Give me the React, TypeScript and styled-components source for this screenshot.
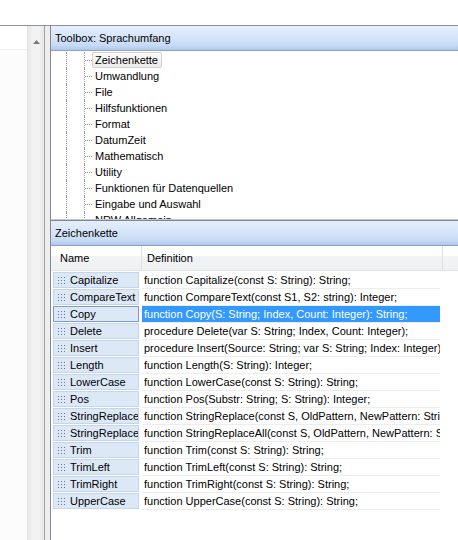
import React from "react";
import styled, { createGlobalStyle } from "styled-components";

const GlobalStyle = createGlobalStyle`
  html, body {
    margin: 0;
    padding: 0;
    background: #fff;
  }
  body {
    font-family: "Liberation Sans", Arial, sans-serif;
    font-size: 11px;
    color: #000;
  }
`;

const Screen = styled.div`
  width: 458px;
  height: 540px;
  overflow: hidden;
  display: flex;
  flex-direction: column;
  background: #fff;
`;

const TopStrip = styled.div`
  height: 25px;
  flex: none;
`;

const Workspace = styled.div`
  flex: 1;
  min-height: 0;
  display: flex;
  border-top: 1px solid #8a929c;
`;

const LeftPane = styled.div`
  width: 44px;
  flex: none;
  display: flex;
  border-right: 1px solid #9ca3ab;
`;

const LeftContent = styled.div`
  flex: 1;
  display: flex;
  flex-direction: column;
  border-right: 1px solid #e4e4e4;
`;

const LeftHeaderRow = styled.div`
  height: 23px;
  background: #fff;
  border-bottom: 1px solid #f0f0f0;
`;

const LeftBody = styled.div`
  flex: 1;
  background: #fcfcfc;
`;

const ScrollTrack = styled.div`
  width: 16px;
  display: flex;
  justify-content: center;
  padding-top: 14px;
  box-sizing: border-box;
  background: linear-gradient(to right, #e8e8e8, #f2f2f2 30%, #f2f2f2 70%, #e6e6e6);
`;

const Splitter = styled.div`
  width: 5px;
  flex: none;
  background: #eeeeee;
`;

const RightPane = styled.div`
  flex: 1;
  min-width: 0;
  display: flex;
  flex-direction: column;
  border-left: 1px solid #828790;
  background: #fff;
`;

const PanelHeader = styled.div<{ $topBorder?: boolean }>`
  flex: none;
  height: 24px;
  line-height: 24px;
  padding-left: 4px;
  white-space: nowrap;
  border-top: ${(p) => (p.$topBorder ? "1px solid #7d8796" : "none")};
  border-bottom: 1px solid #8ba2c2;
  background: linear-gradient(
    to bottom,
    #e4eefc 0%,
    #d7e5f9 45%,
    #c7dbf5 80%,
    #afc8ec 100%
  );
`;

const Tree = styled.div`
  flex: none;
  height: 169px;
  padding-top: 1px;
  box-sizing: border-box;
  overflow: hidden;
  border-bottom: 1px solid #c8c8c8;
`;

const TreeRow = styled.div`
  display: flex;
  height: 16px;
`;

const Indent = styled.div`
  width: 15px;
  flex: none;
`;

const Guide = styled.div`
  width: 18px;
  flex: none;
  border-left: 1px dotted #9a9a9a;
  box-sizing: border-box;
`;

const Branch = styled.div`
  width: 8px;
  flex: none;
  display: flex;
  align-items: center;
  border-left: 1px dotted #9a9a9a;
  box-sizing: border-box;
`;

const Connector = styled.div`
  flex: 1;
  height: 0;
  border-top: 1px dotted #9a9a9a;
`;

const TreeLabel = styled.div<{ $selected?: boolean }>`
  height: 16px;
  line-height: 14px;
  padding: 0 3px 0 2px;
  box-sizing: border-box;
  white-space: nowrap;
  border-radius: 2px;
  border: 1px solid ${(p) => (p.$selected ? "#d2d2d2" : "transparent")};
  background: ${(p) =>
    p.$selected ? "linear-gradient(to bottom, #fafafa, #ececec)" : "transparent"};
`;

const ListArea = styled.div`
  flex: 1;
  min-height: 0;
  overflow: hidden;
`;

const ColumnHeader = styled.div`
  display: grid;
  grid-template-columns: 91px 301px 1fr;
  height: 24px;
  border-bottom: 1px solid #e2e2e2;
  background: linear-gradient(to bottom, #fff 0%, #fff 42%, #f3f4f6 42%, #eff0f2 100%);
`;

const HeaderCell = styled.div<{ $pad: number; $last?: boolean }>`
  line-height: 24px;
  padding-left: ${(p) => p.$pad}px;
  border-right: ${(p) => (p.$last ? "none" : "1px solid #e0e0e0")};
  white-space: nowrap;
`;

const Rows = styled.div`
  padding-top: 1px;
`;

const Row = styled.div`
  display: grid;
  grid-template-columns: 91px 301px 1fr;
  height: 17px;
  align-items: start;
`;

const NameButton = styled.div<{ $selected?: boolean }>`
  margin-left: 2px;
  width: 86px;
  height: 16px;
  box-sizing: border-box;
  display: flex;
  align-items: center;
  gap: 5px;
  padding-left: 4px;
  overflow: hidden;
  white-space: nowrap;
  background: #dde8f7;
  border: 1px solid ${(p) => (p.$selected ? "#7c9dcb" : "#c5d5ec")};
`;

const DefCell = styled.div<{ $selected?: boolean }>`
  width: 298px;
  height: 17px;
  line-height: 16px;
  padding-left: 2px;
  box-sizing: border-box;
  overflow: hidden;
  white-space: nowrap;
  border-bottom: 1px solid #ededed;
  background: ${(p) => (p.$selected ? "#3399ff" : "#fff")};
  color: ${(p) => (p.$selected ? "#fff" : "#000")};
`;

const Grip = () => (
  <svg width="7" height="7" viewBox="0 0 7 7" style={{ flex: "none" }}>
    {[0.5, 3.5, 6.5].map((x) =>
      [0.5, 3.5, 6.5].map((y) => (
        <rect key={`${x}-${y}`} x={x - 0.5} y={y - 0.5} width="1" height="1" fill="#5877a3" />
      ))
    )}
  </svg>
);

const UpArrow = () => (
  <svg width="7" height="4" viewBox="0 0 7 4">
    <path d="M0 4 L3.5 0 L7 4 Z" fill="#7a7a7a" />
  </svg>
);

const treeItems = [
  "Zeichenkette",
  "Umwandlung",
  "File",
  "Hilfsfunktionen",
  "Format",
  "DatumZeit",
  "Mathematisch",
  "Utility",
  "Funktionen für Datenquellen",
  "Eingabe und Auswahl",
  "NRW Allgemein",
];

const functions = [
  ["Capitalize", "function Capitalize(const S: String): String;"],
  ["CompareText", "function CompareText(const S1, S2: string): Integer;"],
  ["Copy", "function Copy(S: String; Index, Count: Integer): String;"],
  ["Delete", "procedure Delete(var S: String; Index, Count: Integer);"],
  ["Insert", "procedure Insert(Source: String; var S: String; Index: Integer);"],
  ["Length", "function Length(S: String): Integer;"],
  ["LowerCase", "function LowerCase(const S: String): String;"],
  ["Pos", "function Pos(Substr: String; S: String): Integer;"],
  [
    "StringReplace",
    "function StringReplace(const S, OldPattern, NewPattern: String; Flags: TReplaceFlags): String;",
  ],
  [
    "StringReplaceAll",
    "function StringReplaceAll(const S, OldPattern, NewPattern: String): String;",
  ],
  ["Trim", "function Trim(const S: String): String;"],
  ["TrimLeft", "function TrimLeft(const S: String): String;"],
  ["TrimRight", "function TrimRight(const S: String): String;"],
  ["UpperCase", "function UpperCase(const S: String): String;"],
];

const App = () => {
  const selected = "Copy";

  return (
    <Screen>
      <GlobalStyle />
      <TopStrip />
      <Workspace>
        <LeftPane>
          <LeftContent>
            <LeftHeaderRow />
            <LeftBody />
          </LeftContent>
          <ScrollTrack>
            <UpArrow />
          </ScrollTrack>
        </LeftPane>
        <Splitter />
        <RightPane>
          <PanelHeader>Toolbox: Sprachumfang</PanelHeader>
          <Tree>
            {treeItems.map((item, i) => (
              <TreeRow key={item}>
                <Indent />
                <Guide />
                <Branch>
                  <Connector />
                </Branch>
                <TreeLabel $selected={i === 0}>{item}</TreeLabel>
              </TreeRow>
            ))}
          </Tree>
          <PanelHeader $topBorder>Zeichenkette</PanelHeader>
          <ListArea>
            <ColumnHeader>
              <HeaderCell $pad={9}>Name</HeaderCell>
              <HeaderCell $pad={5}>Definition</HeaderCell>
              <HeaderCell $pad={0} $last />
            </ColumnHeader>
            <Rows>
              {functions.map(([name, def]) => (
                <Row key={name}>
                  <NameButton $selected={name === selected}>
                    <Grip />
                    <span>{name}</span>
                  </NameButton>
                  <DefCell $selected={name === selected}>{def}</DefCell>
                  <div />
                </Row>
              ))}
            </Rows>
          </ListArea>
        </RightPane>
      </Workspace>
    </Screen>
  );
};

export default App;
